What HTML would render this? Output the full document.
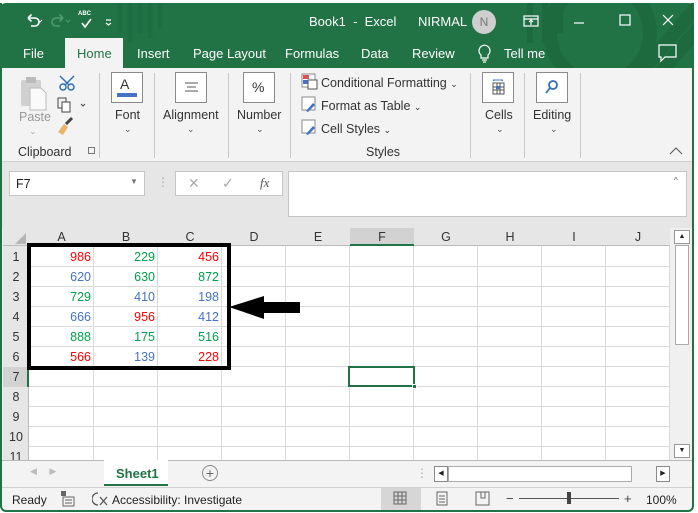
<!DOCTYPE html>
<html><head><meta charset="utf-8"><style>
*{box-sizing:border-box;margin:0;padding:0}
body{width:698px;height:513px;overflow:hidden;background:#fff;font-family:"Liberation Sans",sans-serif;font-size:12px;color:#222;position:relative}
.a{position:absolute}
.t{white-space:nowrap}
.w{color:#fff;font-size:13px}
.rb{color:#333;font-size:12.5px}
.box{position:absolute;border:1px solid #8a8a8a;background:#fff}
.vs{position:absolute;width:1px;background:#c8c8c8}
.hl{position:absolute;height:1px;background:#dadada;left:29px;width:641px}
.vl{position:absolute;width:1px;background:#dadada;top:246px;height:214px}
.ch{position:absolute;top:228px;height:18px;text-align:center;font-size:12.5px;color:#333;line-height:18px}
.rh{position:absolute;left:3px;width:26px;text-align:center;font-size:12.5px;color:#333;height:20px;line-height:20px}
.n{position:absolute;width:60px;text-align:right;font-size:12.5px;height:20px;line-height:20px}
.r{color:#f00}.g{color:#00a04a}.b{color:#4472c4}
</style></head><body>
<div class="a" style="left:0;top:3px;width:694px;height:509px;border:2px solid #217346;border-top:none;border-radius:0 0 6px 6px;background:#f3f3f3"></div>
<div class="a" style="left:0;top:3px;width:694px;height:65px;background:#217346;border-radius:6px 6px 0 0"></div>
<svg class="a" style="left:490px;top:3px" width="204" height="65"><g fill="none" stroke="#1d6a3f" stroke-width="14"><circle cx="110" cy="30" r="50"/><path d="M170 70 L230 0 M150 70 L210 0"/></g><path d="M40 0v40M55 0v40M70 0v30" stroke="#1d6a3f" stroke-width="6"/></svg>
<svg class="a" style="left:0;top:3px" width="300" height="65"><path d="M120 0v30M130 0v40M140 0v30M150 0v35M160 0v25" stroke="#1d6a3f" stroke-width="5" opacity=".7"/></svg>
<svg class="a" style="left:26px;top:12px" width="100" height="18" fill="none" stroke="#fff" stroke-width="1.6"><path d="M2 6h7a4 4 0 0 1 0 8H5M2 6l3.5-3.5M2 6l3.5 3.5"/><path d="M12 8l2 2 2-2" stroke-width="1"/><path d="M37 6h-7a4 4 0 0 0 0 8h4M37 6l-3.5-3.5M37 6l-3.5 3.5" stroke="#4f9a6c"/><path d="M40 8l2 2 2-2" stroke="#4f9a6c" stroke-width="1"/><path d="M56 11l3 4 6-8"/><path d="M80 8h5M80 11l2.5 2 2.5-2" stroke-width="1.2"/></svg>
<div class="a t" style="left:78px;top:11px;color:#fff;font-size:6px;font-weight:bold">ABC</div>
<div class="a t w" style="left:309px;top:14px">Book1 &nbsp;- &nbsp;Excel</div>
<div class="a t w" style="left:418px;top:14px">NIRMAL</div>
<div class="a" style="left:472px;top:10px;width:24px;height:24px;border-radius:50%;background:#cfcfcf;color:#777;text-align:center;line-height:24px;font-size:12px">N</div>
<svg class="a" style="left:520px;top:10px" width="175" height="24" fill="none" stroke="#fff" stroke-width="1.2"><rect x="4" y="6" width="14" height="10"/><path d="M4 9h14M11 15v-5M9 12l2-2 2 2"/><path d="M54 13h10"/><rect x="100" y="5" width="10" height="10"/><path d="M143 5l10 10M153 5l-10 10"/></svg>
<div class="a" style="left:65px;top:38px;width:58px;height:30px;background:#f3f3f3"></div>
<div class="a t w" style="left:23px;top:46px">File</div>
<div class="a t" style="left:77px;top:46px;color:#217346;font-size:13px">Home</div>
<div class="a t w" style="left:137px;top:46px">Insert</div>
<div class="a t w" style="left:193px;top:46px">Page Layout</div>
<div class="a t w" style="left:285px;top:46px">Formulas</div>
<div class="a t w" style="left:361px;top:46px">Data</div>
<div class="a t w" style="left:412px;top:46px">Review</div>
<svg class="a" style="left:476px;top:42px" width="18" height="22" fill="none" stroke="#fff" stroke-width="1.2"><path d="M5 13a5.5 5.5 0 1 1 7 0v3H5z M6 18h5M7 20h3"/></svg>
<div class="a t w" style="left:504px;top:46px">Tell me</div>
<svg class="a" style="left:657px;top:43px" width="22" height="20" fill="none" stroke="#fff" stroke-width="1.2"><path d="M2 2h17v12H8l-4 4v-4H2z"/></svg>
<svg class="a" style="left:18px;top:74px" width="70" height="70"><rect x="3" y="6" width="20" height="26" rx="2" fill="#d0d0d0"/><rect x="8" y="3" width="10" height="6" fill="#bbb"/><path d="M12 14h11l5 5v17H12z" fill="#fafafa" stroke="#bbb"/><g stroke="#2f6fb5" stroke-width="1.5" fill="none"><circle cx="45" cy="13" r="3"/><circle cx="53" cy="13" r="3"/><path d="M42 2l9 9M56 2l-9 9"/></g><g fill="none" stroke="#444"><rect x="40" y="24" width="8" height="10"/><rect x="44" y="28" width="8" height="10" fill="#fff"/><path d="M63 30l2 2 2-2"/></g><path d="M40 58l6-8 4 3-5 8z" fill="#e8b56a"/><path d="M48 50l6-6" stroke="#444" stroke-width="3"/></svg>
<div class="a t" style="left:19px;top:110px;color:#999;font-size:12.5px">Paste</div>
<div class="a t" style="left:29px;top:126px;color:#aaa;font-size:9px">⌄</div>
<div class="a t rb" style="left:18px;top:145px">Clipboard</div>
<div class="a" style="left:88px;top:147px;width:7px;height:7px;border:1px solid #777"></div>
<div class="vs" style="left:99px;top:73px;height:85px"></div>
<div class="box" style="left:111px;top:72px;width:32px;height:31px"></div>
<div class="a t" style="left:120px;top:76px;font-size:14px;color:#333">A</div>
<div class="a" style="left:117px;top:93px;width:20px;height:4px;background:#4472c4"></div>
<div class="a t rb" style="left:115px;top:108px">Font</div>
<div class="a t" style="left:124px;top:124px;font-size:9px;color:#555">⌄</div>
<div class="vs" style="left:154px;top:73px;height:85px"></div>
<div class="box" style="left:175px;top:72px;width:32px;height:31px"></div>
<svg class="a" style="left:182px;top:80px" width="20" height="16" stroke="#555"><path d="M3 3h13M5 7h9M3 11h13"/></svg>
<div class="a t rb" style="left:163px;top:108px">Alignment</div>
<div class="a t" style="left:187px;top:124px;font-size:9px;color:#555">⌄</div>
<div class="vs" style="left:228px;top:73px;height:85px"></div>
<div class="box" style="left:243px;top:72px;width:32px;height:31px"></div>
<div class="a t" style="left:252px;top:79px;font-size:14px;color:#333">%</div>
<div class="a t rb" style="left:237px;top:108px">Number</div>
<div class="a t" style="left:256px;top:124px;font-size:9px;color:#555">⌄</div>
<div class="vs" style="left:290px;top:73px;height:85px"></div>
<svg class="a" style="left:301px;top:73px" width="20" height="66"><rect x="1" y="1" width="13" height="13" fill="#fff" stroke="#888"/><rect x="2" y="2" width="6" height="4" fill="#e05050"/><rect x="2" y="7" width="6" height="4" fill="#4472c4"/><rect x="7" y="7" width="9" height="9" fill="#fff" stroke="#555"/><g fill="#fff" stroke="#888"><rect x="1" y="24" width="13" height="13"/><rect x="1" y="47" width="13" height="13"/></g><path d="M5 38l7-8 2 2-7 7z M5 61l7-8 2 2-7 7z" fill="#4472c4"/></svg>
<div class="a t rb" style="left:321px;top:76px">Conditional Formatting <span style="font-size:9px">⌄</span></div>
<div class="a t rb" style="left:321px;top:99px">Format as Table <span style="font-size:9px">⌄</span></div>
<div class="a t rb" style="left:321px;top:122px">Cell Styles <span style="font-size:9px">⌄</span></div>
<div class="a t rb" style="left:366px;top:145px">Styles</div>
<div class="vs" style="left:470px;top:73px;height:85px"></div>
<div class="box" style="left:482px;top:72px;width:32px;height:31px"></div>
<svg class="a" style="left:489px;top:78px" width="20" height="18" stroke="#555" fill="none"><path d="M4 2h10M4 2l1 1M14 2l-1 1" stroke="#4472c4"/><rect x="4" y="5" width="11" height="11"/><path d="M4 9h11M4 12h11M8 5v11M11 5v11"/><rect x="7" y="8" width="4" height="3" fill="#4472c4" stroke="none"/></svg>
<div class="a t rb" style="left:485px;top:108px">Cells</div>
<div class="a t" style="left:496px;top:124px;font-size:9px;color:#555">⌄</div>
<div class="vs" style="left:524px;top:73px;height:85px"></div>
<div class="box" style="left:536px;top:72px;width:32px;height:31px"></div>
<svg class="a" style="left:543px;top:78px" width="18" height="18" fill="none" stroke="#2f6fb5" stroke-width="1.8"><circle cx="10" cy="7" r="4"/><path d="M7 10l-4 5"/></svg>
<div class="a t rb" style="left:533px;top:108px">Editing</div>
<div class="a t" style="left:550px;top:124px;font-size:9px;color:#555">⌄</div>
<div class="vs" style="left:580px;top:73px;height:85px"></div>
<svg class="a" style="left:668px;top:145px" width="16" height="12" fill="none" stroke="#555"><path d="M2 9l6-6 6 6"/></svg>
<div class="a" style="left:2px;top:161px;width:690px;height:67px;background:#e6e6e6;border-top:1px solid #d0d0d0"></div>
<div class="a" style="left:9px;top:171px;width:136px;height:25px;background:#fff;border:1px solid #c6c6c6"></div>
<div class="a t" style="left:16px;top:177px;font-size:12.5px">F7</div>
<div class="a t" style="left:130px;top:177px;font-size:8px;color:#777">▼</div>
<div class="a t" style="left:157px;top:175px;color:#aaa">⋮</div>
<div class="a" style="left:175px;top:171px;width:108px;height:25px;background:#fff;border:1px solid #c6c6c6"></div>
<div class="a t" style="left:188px;top:175px;color:#aaa;font-size:14px">✕</div>
<div class="a t" style="left:222px;top:175px;color:#aaa;font-size:14px">✓</div>
<div class="a t" style="left:260px;top:175px;color:#555;font-size:13px;font-family:'Liberation Serif',serif;font-style:italic">fx</div>
<div class="a" style="left:288px;top:171px;width:399px;height:46px;background:#fff;border:1px solid #c6c6c6"></div>
<div class="a t" style="left:674px;top:176px;font-size:8px;color:#555">^</div>
<div class="a" style="left:3px;top:228px;width:667px;height:232px;background:#fff"></div>
<div class="a" style="left:3px;top:228px;width:667px;height:18px;background:#e6e6e6;border-bottom:1px solid #bbb"></div>
<div class="a" style="left:3px;top:246px;width:26px;height:214px;background:#e6e6e6;border-right:1px solid #bbb"></div>
<svg class="a" style="left:12px;top:231px" width="16" height="14"><path d="M14 2v11H3z" fill="#b5b5b5"/></svg>
<div class="a" style="left:350px;top:228px;width:64px;height:18px;background:#d2d2d2;border-bottom:2px solid #217346"></div>
<div class="a" style="left:3px;top:367px;width:26px;height:20px;background:#d2d2d2;border-right:2px solid #217346"></div>
<div class="ch" style="left:29px;width:65px">A</div><div class="ch" style="left:94px;width:64px">B</div><div class="ch" style="left:158px;width:64px">C</div><div class="ch" style="left:222px;width:64px">D</div><div class="ch" style="left:286px;width:64px">E</div><div class="ch" style="left:350px;width:64px">F</div><div class="ch" style="left:414px;width:64px">G</div><div class="ch" style="left:478px;width:64px">H</div><div class="ch" style="left:542px;width:64px">I</div><div class="ch" style="left:606px;width:64px">J</div>
<div class="vl" style="left:93px"></div><div class="vl" style="left:157px"></div><div class="vl" style="left:221px"></div><div class="vl" style="left:285px"></div><div class="vl" style="left:349px"></div><div class="vl" style="left:413px"></div><div class="vl" style="left:477px"></div><div class="vl" style="left:541px"></div><div class="vl" style="left:605px"></div><div class="vl" style="left:669px"></div>
<div class="hl" style="top:266px"></div><div class="hl" style="top:286px"></div><div class="hl" style="top:306px"></div><div class="hl" style="top:326px"></div><div class="hl" style="top:346px"></div><div class="hl" style="top:366px"></div><div class="hl" style="top:386px"></div><div class="hl" style="top:406px"></div><div class="hl" style="top:426px"></div><div class="hl" style="top:446px"></div>
<div class="rh" style="top:247px">1</div><div class="rh" style="top:267px">2</div><div class="rh" style="top:287px">3</div><div class="rh" style="top:307px">4</div><div class="rh" style="top:327px">5</div><div class="rh" style="top:347px">6</div><div class="rh" style="top:367px">7</div><div class="rh" style="top:387px">8</div><div class="rh" style="top:407px">9</div><div class="rh" style="top:427px">10</div><div class="rh" style="top:447px;height:13px;overflow:hidden">11</div>
<div class="n r" style="left:31px;top:247px">986</div><div class="n g" style="left:95px;top:247px">229</div><div class="n r" style="left:159px;top:247px">456</div>
<div class="n b" style="left:31px;top:267px">620</div><div class="n g" style="left:95px;top:267px">630</div><div class="n g" style="left:159px;top:267px">872</div>
<div class="n g" style="left:31px;top:287px">729</div><div class="n b" style="left:95px;top:287px">410</div><div class="n b" style="left:159px;top:287px">198</div>
<div class="n b" style="left:31px;top:307px">666</div><div class="n r" style="left:95px;top:307px">956</div><div class="n b" style="left:159px;top:307px">412</div>
<div class="n g" style="left:31px;top:327px">888</div><div class="n g" style="left:95px;top:327px">175</div><div class="n g" style="left:159px;top:327px">516</div>
<div class="n r" style="left:31px;top:347px">566</div><div class="n b" style="left:95px;top:347px">139</div><div class="n r" style="left:159px;top:347px">228</div>
<div class="a" style="left:27px;top:243px;width:204px;height:127px;border:4px solid #000"></div>
<div class="a" style="left:348px;top:366px;width:67px;height:21px;border:2px solid #217346"></div>
<div class="a" style="left:412px;top:384px;width:5px;height:5px;background:#217346;border:1px solid #fff"></div>
<svg class="a" style="left:228px;top:295px" width="75" height="25"><path d="M1 12L36 1v6h36v11H36v6z" fill="#000"/></svg>
<div class="a" style="left:670px;top:228px;width:22px;height:232px;background:#f0f0f0"></div>
<div class="a" style="left:674px;top:230px;width:16px;height:14px;border:1px solid #999;background:#fff;font-size:7px;text-align:center;line-height:12px">▲</div>
<div class="a" style="left:675px;top:245px;width:14px;height:100px;border:1px solid #aaa;background:#fff"></div>
<div class="a" style="left:674px;top:444px;width:16px;height:14px;border:1px solid #999;background:#fff;font-size:7px;text-align:center;line-height:12px">▼</div>
<div class="a" style="left:2px;top:460px;width:690px;height:1px;background:#bbb"></div>
<div class="a t" style="left:30px;top:466px;color:#bbb;font-size:9px">◀ &nbsp; &nbsp; ▶</div>
<div class="a" style="left:104px;top:460px;width:64px;height:26px;background:#fff;border-bottom:2px solid #217346"></div>
<div class="a t" style="left:116px;top:466px;color:#217346;font-weight:bold;font-size:13px">Sheet1</div>
<div class="a" style="left:202px;top:465px;width:16px;height:16px;border:1px solid #888;border-radius:50%;text-align:center;line-height:14px;color:#666;font-size:14px">+</div>
<div class="a t" style="left:416px;top:466px;color:#aaa">⋮</div>
<div class="a" style="left:434px;top:466px;width:14px;height:16px;border:1px solid #888;background:#fff;font-size:7px;line-height:14px;text-align:center">◀</div>
<div class="a" style="left:448px;top:466px;width:184px;height:16px;border:1px solid #aaa;background:#fff"></div>
<div class="a" style="left:656px;top:466px;width:14px;height:16px;border:1px solid #888;background:#fff;font-size:7px;line-height:14px;text-align:center">▶</div>
<div class="a" style="left:2px;top:487px;width:690px;height:1px;background:#d0d0d0"></div>
<div class="a t" style="left:12px;top:493px;font-size:12px">Ready</div>
<svg class="a" style="left:61px;top:491px" width="14" height="16" fill="#666"><rect x="0" y="0" width="5" height="5"/><rect x="2" y="6" width="11" height="9" fill="none" stroke="#666"/><path d="M4 9h7M4 12h7" stroke="#666"/></svg>
<svg class="a" style="left:92px;top:491px" width="18" height="16" fill="none" stroke="#555" stroke-width="1.3"><path d="M6 2a6 6 0 0 0 0 12"/><path d="M8 6l7 8M15 6l-7 8"/></svg>
<div class="a t" style="left:112px;top:493px;font-size:12px">Accessibility: Investigate</div>
<div class="a" style="left:381px;top:488px;width:40px;height:22px;background:#d6d6d6"></div>
<svg class="a" style="left:393px;top:491px" width="150" height="16" fill="none" stroke="#666"><rect x="1" y="1" width="12" height="12"/><path d="M1 5h12M1 9h12M5 1v12M9 1v12"/><rect x="44" y="1" width="10" height="13"/><path d="M46 5h6M46 8h6M46 11h6"/><rect x="83" y="1" width="13" height="13"/><path d="M88 1v6h4v-6"/></svg>
<div class="a t" style="left:506px;top:491px;font-size:13px;color:#444">−</div>
<div class="a" style="left:519px;top:498px;width:100px;height:1px;background:#555"></div>
<div class="a" style="left:567px;top:492px;width:4px;height:12px;background:#444"></div>
<div class="a t" style="left:624px;top:491px;font-size:13px;color:#444">+</div>
<div class="a t" style="left:646px;top:493px;font-size:12px">100%</div>
</body></html>
